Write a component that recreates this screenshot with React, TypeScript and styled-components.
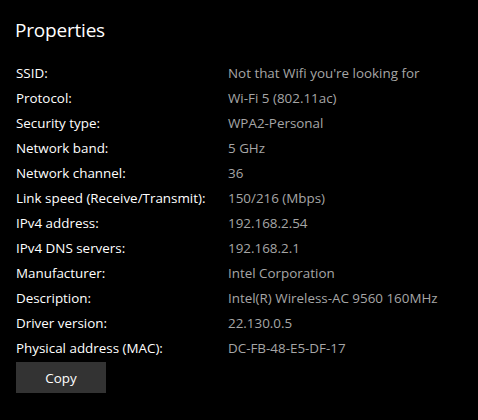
import React from 'react'
import styled, { createGlobalStyle } from 'styled-components'

const GlobalStyle = createGlobalStyle`
  html, body {
    margin: 0;
    padding: 0;
    background: #000;
  }
  body {
    font-family: "Open Sans", "Segoe UI", sans-serif;
  }
`

const Panel = styled.div`
  width: 478px;
  height: 420px;
  box-sizing: border-box;
  padding: 16px 16px 0 16px;
  background: #000;
  color: #fff;
`

const Title = styled.h2`
  margin: 0 0 0 -1px;
  font-size: 19px;
  font-weight: 400;
  line-height: 28px;
  letter-spacing: -0.2px;
`

const List = styled.dl`
  margin: 16px 0 0 0;
  display: grid;
  grid-template-columns: 212px 1fr;
  grid-auto-rows: 25px;
  align-items: center;
`

const Label = styled.dt`
  font-size: 13.4px;
  color: #fff;
`

const Value = styled.dd`
  margin: 0;
  font-size: 13.4px;
  color: #a6a6a6;
`

const CopyButton = styled.button`
  margin-top: 2px;
  width: 90px;
  height: 31px;
  border: none;
  background: #333;
  color: #fff;
  font-family: inherit;
  font-size: 13.4px;
  cursor: pointer;
`

const properties: [string, string][] = [
  ['SSID:', "Not that Wifi you're looking for"],
  ['Protocol:', 'Wi-Fi 5 (802.11ac)'],
  ['Security type:', 'WPA2-Personal'],
  ['Network band:', '5 GHz'],
  ['Network channel:', '36'],
  ['Link speed (Receive/Transmit):', '150/216 (Mbps)'],
  ['IPv4 address:', '192.168.2.54'],
  ['IPv4 DNS servers:', '192.168.2.1'],
  ['Manufacturer:', 'Intel Corporation'],
  ['Description:', 'Intel(R) Wireless-AC 9560 160MHz'],
  ['Driver version:', '22.130.0.5'],
  ['Physical address (MAC):', 'DC-FB-48-E5-DF-17'],
]

const App: React.FC = () => (
  <>
    <GlobalStyle />
    <Panel>
      <Title>Properties</Title>
      <List>
        {properties.map(([label, value]) => (
          <React.Fragment key={label}>
            <Label>{label}</Label>
            <Value>{value}</Value>
          </React.Fragment>
        ))}
      </List>
      <CopyButton>Copy</CopyButton>
    </Panel>
  </>
)

export default App
